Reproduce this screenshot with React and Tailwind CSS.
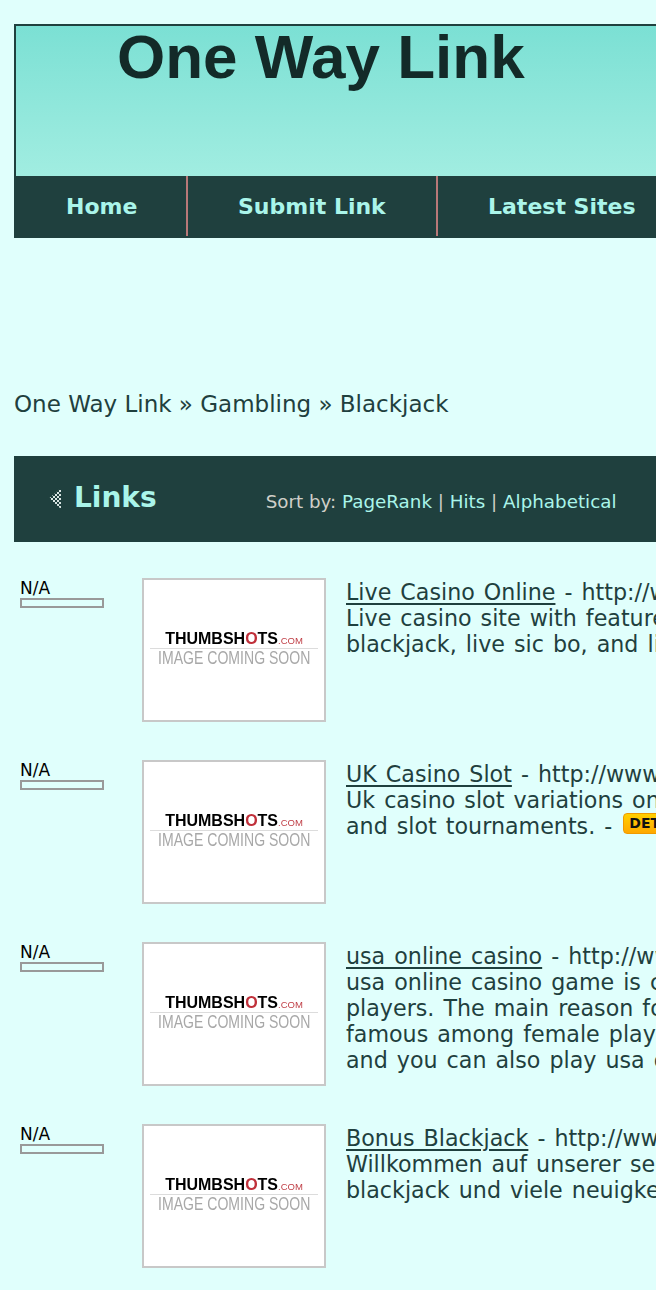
import React from 'react'

const sites = [
  { name: 'Live Casino Online', url: 'http://www.livecasino.example', lines: ['Live casino site with features like live roulette, live', 'blackjack, live sic bo, and live baccarat games.'] },
  { name: 'UK Casino Slot', url: 'http://www.ukcasinoslot.example', lines: ['Uk casino slot variations online with bonus games'], last: 'and slot tournaments. - ' },
  { name: 'usa online casino', url: 'http://www.usaonlinecasino.example', lines: ['usa online casino game is completely popular among', 'players. The main reason for this game to become', 'famous among female players is that it is very easy', 'and you can also play usa online casino at home.'] },
  { name: 'Bonus Blackjack', url: 'http://www.bonusblackjack.example', lines: ['Willkommen auf unserer seite mit bonus angeboten,', 'blackjack und viele neuigkeiten aus der casino welt.'] },
]

function Thumb() {
  return (
    <div className="w-[184px] h-[144px] shrink-0 border-2 border-[#c8c8c8] bg-white flex flex-col items-center pt-[50px] font-['Liberation_Sans',sans-serif] blur-[0.4px]">
      <div className="h-[18px] flex items-baseline text-[16px] leading-[18px] font-bold text-black">
        <span>THUMBSH</span>
        <span className="text-[#c0303a]">O</span>
        <span>TS</span>
        <span className="text-[9.5px] font-normal text-[#c04048]">.COM</span>
      </div>
      <div className="w-[168px] h-px bg-[#dcdcdc]" />
      <div className="-mt-[2px] text-[18.5px] leading-[22px] text-[#a8a8a8] scale-x-[0.76] whitespace-nowrap">IMAGE COMING SOON</div>
    </div>
  )
}

function Row({ site }) {
  return (
    <div className="flex h-[182px]">
      <div className="w-[128px] shrink-0 pl-[6px]">
        <div className="text-[17px] leading-[20px] text-black h-[20px]">N/A</div>
        <div className="w-[84px] h-[10px] border-2 border-[#999999]" />
      </div>
      <Thumb />
      <div className="ml-[20px] text-[22.2px] leading-[26px] [word-spacing:2px] text-[#1f403e] whitespace-nowrap mt-px">
        <div><a className="underline underline-offset-[3px]">{site.name}</a> - {site.url}</div>
        {site.lines.map(l => <div key={l}>{l}</div>)}
        {site.last && (
          <div className="flex items-center">
            <span className="whitespace-pre">{site.last}</span>
            <span className="ml-[2px] -mt-[6px] pl-[5px] pr-[5px] h-[21px] rounded-[4px] border border-[#f09a00] bg-gradient-to-b from-[#ffd000] to-[#ffa800] text-[14px] leading-[18px] font-bold text-[#111]">DETAILS</span>
          </div>
        )}
      </div>
    </div>
  )
}

export default function App() {
  return (
    <div className="w-[656px] h-[1290px] overflow-hidden bg-[#e0fffc] pl-[14px] pt-[24px] font-['DejaVu_Sans',sans-serif]">
      <div className="w-[800px]">
        <div className="h-[152px] border-l-2 border-t-2 border-[#1f403e] bg-gradient-to-b from-[#7be0d4] to-[#a1ede1] pl-[101px]">
          <div className="font-['Liberation_Sans',sans-serif] font-bold text-[62px] leading-[62px] text-[#132a28]">One Way Link</div>
        </div>
        <div className="h-[62px] bg-[#1f403e] flex font-bold text-[22px] text-[#aaf5ea] pb-[2px]">
          <div className="w-[174px] border-r-2 border-[#b87878] flex items-center pl-[52px]">Home</div>
          <div className="w-[250px] border-r-2 border-[#b87878] flex items-center pl-[50px]">Submit Link</div>
          <div className="flex items-center pl-[50px]">Latest Sites</div>
        </div>

        <div className="mt-[152px] h-[28px] text-[23px] leading-[28px] text-[#1f403e]">One Way Link » Gambling » Blackjack</div>

        <div className="mt-[38px] h-[86px] bg-[#1f403e] flex items-center">
          <svg className="ml-[35px] -mt-[2px]" width="12" height="21" viewBox="0 0 12 21">
            <defs>
              <pattern id="dither" width="4" height="4" patternUnits="userSpaceOnUse">
                <rect width="2" height="2" fill="#d8e4e2" />
                <rect x="2" y="2" width="2" height="2" fill="#d8e4e2" />
              </pattern>
            </defs>
            <path d="M0 10.5 12 0v21z" fill="url(#dither)" />
          </svg>
          <span className="ml-[13px] font-bold text-[28px] leading-[36px] text-[#aaf5ea] -mt-[2px]">Links</span>
          <span className="ml-[109px] text-[18.3px] text-[#cfcfc8] mt-[6px]">
            Sort by: <a className="text-[#aaf5ea]">PageRank</a> | <a className="text-[#aaf5ea]">Hits</a> | <a className="text-[#aaf5ea]">Alphabetical</a>
          </span>
        </div>

        <div className="mt-[36px]">
          {sites.map(s => <Row key={s.name} site={s} />)}
        </div>
      </div>
    </div>
  )
}
